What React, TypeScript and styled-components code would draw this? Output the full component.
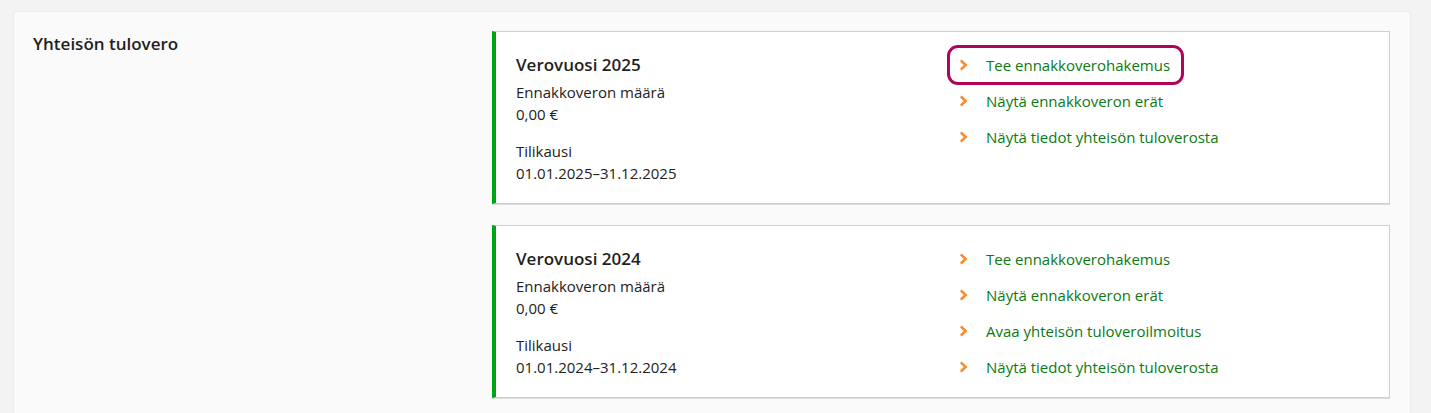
import styled, { createGlobalStyle } from "styled-components";

const GlobalStyle = createGlobalStyle`
  body {
    margin: 0;
    background: #f3f3f3;
    font-family: "Open Sans", "Noto Sans", Arial, sans-serif;
    color: #222;
  }
`;

const Page = styled.div`
  padding: 11px 20px 0 13px;
`;

const Panel = styled.section`
  width: 1398px;
  box-sizing: border-box;
  background: #fafafa;
  border: 1px solid #ececec;
  border-radius: 4px;
  padding: 19px 20px 20px 19px;
  display: grid;
  grid-template-columns: 459px 1fr;
`;

const SectionTitle = styled.h2`
  margin: 0;
  font-size: 17px;
  line-height: 26px;
  font-weight: 600;
  color: #1f1f1f;
`;

const CardList = styled.div`
  display: flex;
  flex-direction: column;
  gap: 21px;
`;

const Card = styled.article`
  background: #fff;
  border: 1px solid #cfcfcf;
  border-left: 4px solid #00a513;
  box-shadow: 0 1px 0 #dcdcdc;
  display: grid;
  grid-template-columns: 443px 1fr;
  padding: 20px 20px 19px 20px;
`;

const Info = styled.div`
  display: flex;
  flex-direction: column;
`;

const YearTitle = styled.h3`
  margin: 0 0 3px;
  font-size: 17px;
  line-height: 26px;
  font-weight: 600;
  color: #1f1f1f;
`;

const Field = styled.div`
  font-size: 15px;
  line-height: 22px;
  color: #222;
  & + & {
    margin-top: 15px;
  }
`;

const Links = styled.ul`
  list-style: none;
  margin: 0;
  padding: 2px 0 0;
  display: flex;
  flex-direction: column;
  gap: 14px;
`;

const LinkItem = styled.li`
  display: flex;
`;

const LinkA = styled.a<{ $focused?: boolean }>`
  display: inline-flex;
  align-items: center;
  gap: 18px;
  margin-left: -3px;
  padding: 0 5px 0 3px;
  font-size: 15px;
  line-height: 22px;
  color: #0b7a12;
  text-decoration: none;
  border-radius: 2px;
  outline: ${(p) => (p.$focused ? "3px solid #b0035a" : "none")};
  outline-offset: 6px;
`;

const Chevron = () => (
  <svg width="9" height="12" viewBox="0 0 9 12" aria-hidden>
    <polyline
      points="1.8,1.4 6.6,6 1.8,10.6"
      fill="none"
      stroke="#fb8a2a"
      strokeWidth="2.6"
    />
  </svg>
);

type Year = {
  year: number;
  links: string[];
};

const years: Year[] = [
  {
    year: 2025,
    links: ["Tee ennakkoverohakemus", "Näytä ennakkoveron erät", "Näytä tiedot yhteisön tuloverosta"],
  },
  {
    year: 2024,
    links: [
      "Tee ennakkoverohakemus",
      "Näytä ennakkoveron erät",
      "Avaa yhteisön tuloveroilmoitus",
      "Näytä tiedot yhteisön tuloverosta",
    ],
  },
];

export default function App() {
  return (
    <>
      <GlobalStyle />
      <Page>
        <Panel>
          <SectionTitle>Yhteisön tulovero</SectionTitle>
          <CardList>
            {years.map((y, i) => (
              <Card key={y.year}>
                <Info>
                  <YearTitle>Verovuosi {y.year}</YearTitle>
                  <Field>
                    Ennakkoveron määrä
                    <br />
                    0,00 €
                  </Field>
                  <Field>
                    Tilikausi
                    <br />
                    01.01.{y.year}–31.12.{y.year}
                  </Field>
                </Info>
                <Links>
                  {y.links.map((l, j) => (
                    <LinkItem key={l}>
                      <LinkA href="#" $focused={i === 0 && j === 0}>
                        <Chevron />
                        {l}
                      </LinkA>
                    </LinkItem>
                  ))}
                </Links>
              </Card>
            ))}
          </CardList>
        </Panel>
      </Page>
    </>
  );
}
